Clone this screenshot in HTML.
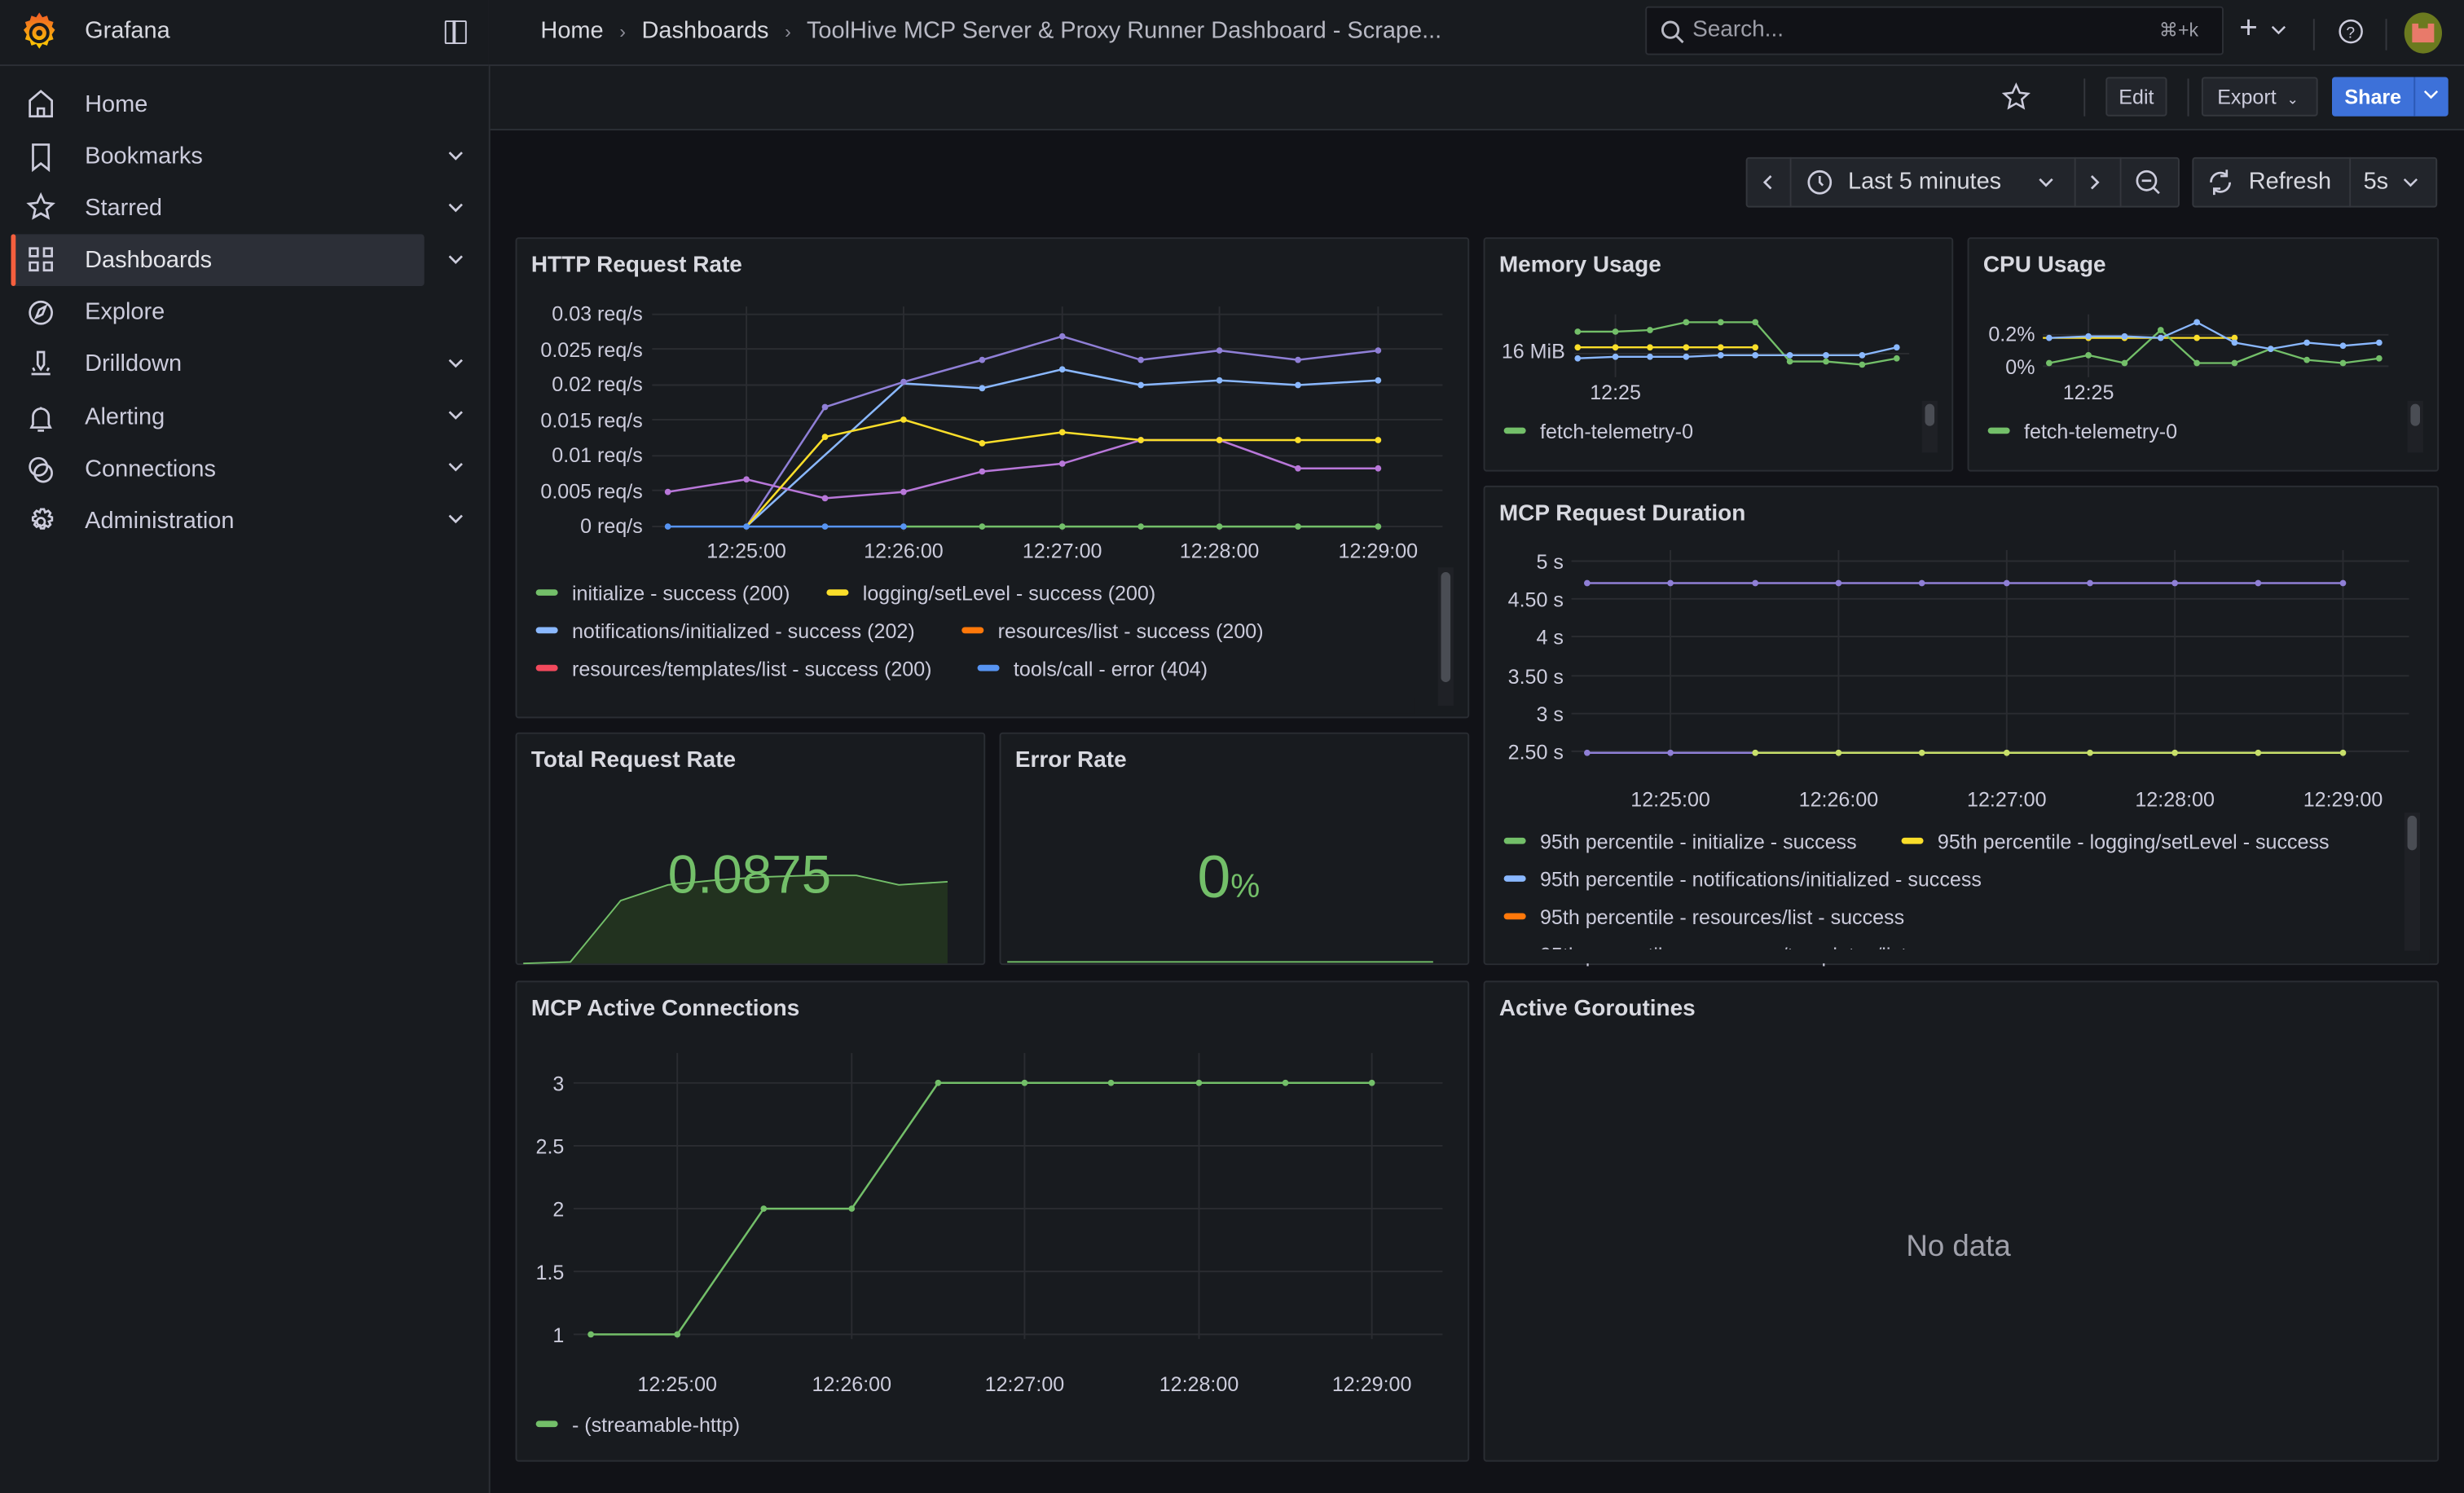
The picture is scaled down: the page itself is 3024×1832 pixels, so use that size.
<!DOCTYPE html>
<html><head><meta charset="utf-8">
<style>
html,body{margin:0;padding:0;background:#111217;overflow:hidden;width:3024px;height:1832px}
#w{position:absolute;left:0;top:0;width:1568px;height:950px;transform:scale(1.92857);transform-origin:0 0;font-family:"Liberation Sans",sans-serif;color:#ccccdc;background:#111217}
.a{position:absolute}
.side{left:0;top:0;width:311px;height:950px;background:#181b1f;border-right:1px solid #2c2f35}
.top{left:311px;top:0;width:1257px;height:41px;background:#181b1f;border-bottom:1px solid #2c2f35}
.tb{left:312px;top:42px;width:1256px;height:40px;background:#181b1f;border-bottom:1px solid #2c2f35}
.nav{left:16px;font-size:15px;color:#ccccdc}
.nav span{position:absolute;left:38px;top:0;white-space:nowrap}
.chev{position:absolute;left:270px;font-size:11px;color:#ccccdc}
.pan{background:#181b1f;border:1px solid #2a2d33;border-radius:2px;box-sizing:border-box}
.pt{position:absolute;left:9px;top:9px;font-size:14.5px;font-weight:bold;color:#d8d9e0}
.btn{background:#22252b;border:1px solid #34373d;border-radius:2px;box-sizing:border-box;font-size:13px;color:#ccccdc;text-align:center}
svg text{font-family:"Liberation Sans",sans-serif}
</style></head><body><div id="w">
<div class="a side"></div>
<div class="a" style="left:0;top:41px;width:311px;height:1px;background:#2c2f35"></div>
<div class="a top"></div>
<div class="a tb"></div>

<!-- logo -->
<svg class="a" style="left:12px;top:7px" width="26" height="28" viewBox="0 0 26 28">
<defs><linearGradient id="lg" x1="0" y1="1" x2="0" y2="0"><stop offset="0" stop-color="#fcd000"/><stop offset="1" stop-color="#f05a28"/></linearGradient></defs>
<path d="M13 1l2 3 3-1 1 3 3 1-1 3 2 2-2 3 1 3-3 1-1 3-3-1-2 3-2-3-3 1-1-3-3-1 1-3-2-3 2-2-1-3 3-1 1-3 3 1z" fill="url(#lg)"/>
<circle cx="13" cy="14" r="5.5" fill="none" stroke="#181b1f" stroke-width="2"/><circle cx="13" cy="14" r="2" fill="#181b1f"/>
</svg>
<div class="a" style="left:54px;top:11px;font-size:15px;color:#d8d9e0">Grafana</div>
<div class="a" style="left:283px;top:13px;width:12px;height:13px;border:1.5px solid #ccccdc;border-radius:1px"></div>
<div class="a" style="left:288px;top:13px;width:1.5px;height:15px;background:#ccccdc"></div>

<div class="a" style="left:7px;top:149px;width:263px;height:33px;background:#2c2f37;border-radius:2px"></div>
<div class="a" style="left:7px;top:149px;width:3px;height:33px;background:#f55f3e;border-radius:2px"></div>

<svg class="a" style="left:16px;top:56px" width="20" height="290" viewBox="0 0 20 290" fill="none" stroke="#ccccdc" stroke-width="1.4">
<path d="M3 18V8l7-6 7 6v10zM8 18v-5h4v5"/>
<path d="M5 36h10v16l-5-4-5 4z"/>
<path d="M10 68l2.3 5 5.3.6-4 3.6 1.1 5.3-4.7-2.7-4.7 2.7 1.1-5.3-4-3.6 5.3-.6z"/>
<path d="M3 102h5v5H3zM12 102h5v5h-5zM3 111h5v5H3zM12 111h5v5h-5z"/>
<circle cx="10" cy="143" r="7"/><path d="M7 146l2-5 4-2-2 5z"/>
<path d="M8 168h4v8l-2 3-2-3zM4 182h12M5 178l1 2M15 178l-1 2"/>
<path d="M5 214v-5a5 5 0 0110 0v5l1 2H4zM8 218h4M10 203v1"/>
<circle cx="8.5" cy="241" r="5.5"/><circle cx="11.5" cy="245" r="5.5"/>
<circle cx="10" cy="276" r="2.5"/><path d="M10 268l2 0 .7 2 2-1 1.4 1.4-1 2 2 .7v2l-2 .7 1 2-1.4 1.4-2-1-.7 2h-2l-.7-2-2 1-1.4-1.4 1-2-2-.7v-2l2-.7-1-2 1.4-1.4 2 1z"/>
</svg>
<div class="a nav" style="top:58px"><span>Home</span></div>
<div class="a nav" style="top:91px"><span>Bookmarks</span></div>
<div class="a nav" style="top:124px"><span>Starred</span></div>
<div class="a nav" style="top:157px"><span style="color:#e4e5ea">Dashboards</span></div>
<div class="a nav" style="top:190px"><span>Explore</span></div>
<div class="a nav" style="top:223px"><span>Drilldown</span></div>
<div class="a nav" style="top:257px"><span>Alerting</span></div>
<div class="a nav" style="top:290px"><span>Connections</span></div>
<div class="a nav" style="top:323px"><span>Administration</span></div>
<svg class="a" style="left:284px;top:94px" width="12" height="245" viewBox="0 0 12 245" fill="none" stroke="#ccccdc" stroke-width="1.4">
<path d="M2 3l4 4 4-4M2 36l4 4 4-4M2 69l4 4 4-4M2 135l4 4 4-4M2 168l4 4 4-4M2 201l4 4 4-4M2 234l4 4 4-4"/></svg>

<!-- breadcrumb -->
<div class="a" style="left:344px;top:11px;font-size:15px;color:#d8d9e0;white-space:nowrap">Home <span style="color:#8e8e99;font-size:12px;margin:0 6px">›</span> Dashboards <span style="color:#8e8e99;font-size:12px;margin:0 6px">›</span> <span style="color:#b8b9c4">ToolHive MCP Server &amp; Proxy Runner Dashboard - Scrape...</span></div>
<div class="a" style="left:1047px;top:4px;width:368px;height:31px;background:#111217;border:1px solid #2c2f35;border-radius:2px;box-sizing:border-box"></div>
<svg class="a" style="left:1056px;top:12px" width="16" height="16" fill="none" stroke="#b8b9c4" stroke-width="1.5"><circle cx="7" cy="7" r="5"/><path d="M11 11l4 4"/></svg>
<div class="a" style="left:1077px;top:11px;font-size:14.5px;color:#9d9ea8">Search...</div>
<div class="a" style="left:1374px;top:12px;font-size:12px;color:#9d9ea8">⌘+k</div>
<div class="a" style="left:1425px;top:7px;font-size:20px;color:#ccccdc">+</div>
<svg class="a" style="left:1445px;top:16px" width="10" height="8" fill="none" stroke="#ccccdc" stroke-width="1.3"><path d="M1 1l4 4 4-4"/></svg>
<div class="a" style="left:1472px;top:12px;width:1px;height:20px;background:#34373d"></div>
<svg class="a" style="left:1487px;top:11px" width="18" height="18" fill="none" stroke="#ccccdc" stroke-width="1.3"><circle cx="9" cy="9" r="7"/><text x="6" y="13" font-size="10" fill="#ccccdc" stroke="none">?</text></svg>
<div class="a" style="left:1518px;top:12px;width:1px;height:20px;background:#34373d"></div>
<div class="a" style="left:1530px;top:8px;width:24px;height:26px;border-radius:50%;background:#6b7a1f;overflow:hidden"><div style="position:absolute;left:5px;top:7px;width:14px;height:12px;background:#e87a6a"></div><div style="position:absolute;left:9px;top:3px;width:6px;height:7px;background:#6b7a1f"></div></div>

<!-- toolbar -->
<svg class="a" style="left:1273px;top:52px" width="20" height="20" fill="none" stroke="#ccccdc" stroke-width="1.3"><path d="M10 2l2.3 5 5.3.6-4 3.6 1.1 5.3-4.7-2.7-4.7 2.7 1.1-5.3-4-3.6 5.3-.6z"/></svg>
<div class="a" style="left:1326px;top:50px;width:1px;height:24px;background:#34373d"></div>
<div class="a btn" style="left:1340px;top:49px;width:39px;height:25px;line-height:23px">Edit</div>
<div class="a" style="left:1392px;top:50px;width:1px;height:24px;background:#34373d"></div>
<div class="a btn" style="left:1401px;top:49px;width:74px;height:25px;line-height:23px;text-align:left;padding-left:9px">Export <span style="font-size:9px;margin-left:3px">⌄</span></div>
<div class="a" style="left:1484px;top:49px;width:74px;height:25px;background:#3d71d9;border-radius:2px"></div>
<div class="a" style="left:1492px;top:54px;font-size:13px;font-weight:bold;color:#fff">Share</div>
<div class="a" style="left:1536px;top:49px;width:1px;height:25px;background:#2b58b5"></div>
<svg class="a" style="left:1542px;top:57px" width="10" height="8" fill="none" stroke="#fff" stroke-width="1.3"><path d="M1 1l4 4 4-4"/></svg>

<!-- time picker -->
<div class="a btn" style="left:1111px;top:100px;width:276px;height:32px"></div>
<div class="a" style="left:1139px;top:100px;width:1px;height:32px;background:#34373d"></div>
<div class="a" style="left:1320px;top:100px;width:1px;height:32px;background:#34373d"></div>
<div class="a" style="left:1349px;top:100px;width:1px;height:32px;background:#34373d"></div>
<svg class="a" style="left:1111px;top:100px" width="276" height="32" fill="none" stroke="#ccccdc" stroke-width="1.4">
<path d="M16 12l-4 4 4 4M220 12l4 4-4 4"/><circle cx="47" cy="16" r="7"/><path d="M47 12v4l2 2"/><path d="M187 14l4 4 4-4"/>
<circle cx="255" cy="15" r="6"/><path d="M252 15h6M259 19l4 4"/></svg>
<div class="a" style="left:1176px;top:107px;font-size:15px;color:#d8d9e0">Last 5 minutes</div>
<div class="a btn" style="left:1395px;top:100px;width:156px;height:32px"></div>
<div class="a" style="left:1495px;top:100px;width:1px;height:32px;background:#34373d"></div>
<svg class="a" style="left:1404px;top:107px" width="18" height="18" fill="none" stroke="#ccccdc" stroke-width="1.4"><path d="M3 9a6 6 0 0110-4.5M15 9a6 6 0 01-10 4.5M13 1v4h-4M5 17v-4h4"/></svg>
<div class="a" style="left:1431px;top:107px;font-size:15px;color:#d8d9e0">Refresh</div>
<div class="a" style="left:1504px;top:107px;font-size:15px;color:#d8d9e0">5s</div>
<svg class="a" style="left:1529px;top:113px" width="10" height="8" fill="none" stroke="#ccccdc" stroke-width="1.3"><path d="M1 1l4 4 4-4"/></svg>

<!-- panels -->
<div class="a pan" style="left:328px;top:151px;width:607px;height:306px"><div class="pt">HTTP Request Rate</div></div>
<div class="a pan" style="left:944px;top:151px;width:299px;height:149px"><div class="pt">Memory Usage</div></div>
<div class="a pan" style="left:1252px;top:151px;width:300px;height:149px"><div class="pt">CPU Usage</div></div>
<div class="a pan" style="left:944px;top:309px;width:608px;height:305px"><div class="pt">MCP Request Duration</div></div>
<div class="a pan" style="left:328px;top:466px;width:299px;height:148px"><div class="pt">Total Request Rate</div></div>
<div class="a pan" style="left:636px;top:466px;width:299px;height:148px"><div class="pt">Error Rate</div></div>
<div class="a pan" style="left:328px;top:624px;width:607px;height:306px"><div class="pt">MCP Active Connections</div></div>
<div class="a pan" style="left:944px;top:624px;width:608px;height:306px"><div class="pt">Active Goroutines</div></div>
<div class="a" style="left:1213px;top:783px;font-size:19px;color:#a0a1ab">No data</div>

<svg class="a" style="left:0;top:0" width="1568" height="950" viewBox="0 0 1568 950">
<g stroke="#2a2c31" stroke-width="1" fill="none">
<path d="M415 200H918M415 222H918M415 245H918M415 267H918M415 290H918M415 312H918M415 335H918M475 195V338M575 195V338M676 195V338M776 195V338M877 195V338"/>
<path d="M1002 225H1215M1028 200V240"/>
<path d="M1300 213H1520M1300 233H1520M1329 200V240"/>
<path d="M1000 357H1533M1000 381H1533M1000 405H1533M1000 430H1533M1000 454H1533M1000 478H1533M1063 350V482M1170 350V482M1277 350V482M1384 350V482M1491 350V482"/>
<path d="M365 689H918M365 729H918M365 769H918M365 809H918M365 849H918M431 670V852M542 670V852M652 670V852M763 670V852M873 670V852"/>
</g>
<g font-size="13" fill="#ccccdc" text-anchor="end">
<text x="409" y="204">0.03 req/s</text><text x="409" y="227">0.025 req/s</text><text x="409" y="249">0.02 req/s</text><text x="409" y="272">0.015 req/s</text><text x="409" y="294">0.01 req/s</text><text x="409" y="317">0.005 req/s</text><text x="409" y="339">0 req/s</text>
<text x="996" y="228">16 MiB</text>
<text x="1295" y="217">0.2%</text><text x="1295" y="238">0%</text>
<text x="995" y="362">5 s</text><text x="995" y="386">4.50 s</text><text x="995" y="410">4 s</text><text x="995" y="435">3.50 s</text><text x="995" y="459">3 s</text><text x="995" y="483">2.50 s</text>
<text x="359" y="694">3</text><text x="359" y="734">2.5</text><text x="359" y="774">2</text><text x="359" y="814">1.5</text><text x="359" y="854">1</text>
</g>
<g font-size="13" fill="#ccccdc" text-anchor="middle">
<text x="475" y="355">12:25:00</text><text x="575" y="355">12:26:00</text><text x="676" y="355">12:27:00</text><text x="776" y="355">12:28:00</text><text x="877" y="355">12:29:00</text>
<text x="1028" y="254">12:25</text><text x="1329" y="254">12:25</text>
<text x="1063" y="513">12:25:00</text><text x="1170" y="513">12:26:00</text><text x="1277" y="513">12:27:00</text><text x="1384" y="513">12:28:00</text><text x="1491" y="513">12:29:00</text>
<text x="431" y="885">12:25:00</text><text x="542" y="885">12:26:00</text><text x="652" y="885">12:27:00</text><text x="763" y="885">12:28:00</text><text x="873" y="885">12:29:00</text>
</g>
<!-- http lines -->
<g fill="none" stroke-width="1.3">
<polyline stroke="#8f7fd6" points="475,335 525,259 575,243 625,229 676,214 726,229 776,223 826,229 877,223"/>
<polyline stroke="#8ab8ff" points="475,335 575,244 625,247 676,235 726,245 776,242 826,245 877,242"/>
<polyline stroke="#b877d9" points="425,313 475,305 525,317 575,313 625,300 676,295 726,280 776,280 826,298 877,298"/>
<polyline stroke="#fade2a" points="475,335 525,278 575,267 625,282 676,275 726,280 776,280 826,280 877,280"/>
<polyline stroke="#73bf69" points="575,335 877,335"/>
<polyline stroke="#5794f2" points="425,335 575,335"/>
</g>
<g fill="#8f7fd6"><circle cx="525" cy="259" r="2"/><circle cx="575" cy="243" r="2"/><circle cx="625" cy="229" r="2"/><circle cx="676" cy="214" r="2"/><circle cx="726" cy="229" r="2"/><circle cx="776" cy="223" r="2"/><circle cx="826" cy="229" r="2"/><circle cx="877" cy="223" r="2"/></g>
<g fill="#8ab8ff"><circle cx="625" cy="247" r="2"/><circle cx="676" cy="235" r="2"/><circle cx="726" cy="245" r="2"/><circle cx="776" cy="242" r="2"/><circle cx="826" cy="245" r="2"/><circle cx="877" cy="242" r="2"/></g>
<g fill="#b877d9"><circle cx="425" cy="313" r="2"/><circle cx="475" cy="305" r="2"/><circle cx="525" cy="317" r="2"/><circle cx="575" cy="313" r="2"/><circle cx="625" cy="300" r="2"/><circle cx="676" cy="295" r="2"/><circle cx="726" cy="280" r="2"/><circle cx="776" cy="280" r="2"/><circle cx="826" cy="298" r="2"/><circle cx="877" cy="298" r="2"/></g>
<g fill="#fade2a"><circle cx="525" cy="278" r="2"/><circle cx="575" cy="267" r="2"/><circle cx="625" cy="282" r="2"/><circle cx="676" cy="275" r="2"/><circle cx="726" cy="280" r="2"/><circle cx="776" cy="280" r="2"/><circle cx="826" cy="280" r="2"/><circle cx="877" cy="280" r="2"/></g>
<g fill="#73bf69"><circle cx="625" cy="335" r="2"/><circle cx="676" cy="335" r="2"/><circle cx="726" cy="335" r="2"/><circle cx="776" cy="335" r="2"/><circle cx="826" cy="335" r="2"/><circle cx="877" cy="335" r="2"/></g>
<g fill="#5794f2"><circle cx="425" cy="335" r="2"/><circle cx="475" cy="335" r="2"/><circle cx="525" cy="335" r="2"/><circle cx="575" cy="335" r="2"/></g>
<!-- http legend -->
<g font-size="13" fill="#ccccdc">
<rect x="341" y="375" width="14" height="4" rx="2" fill="#73bf69"/><text x="364" y="382">initialize - success (200)</text>
<rect x="526" y="375" width="14" height="4" rx="2" fill="#fade2a"/><text x="549" y="382">logging/setLevel - success (200)</text>
<rect x="341" y="399" width="14" height="4" rx="2" fill="#8ab8ff"/><text x="364" y="406">notifications/initialized - success (202)</text>
<rect x="612" y="399" width="14" height="4" rx="2" fill="#ff780a"/><text x="635" y="406">resources/list - success (200)</text>
<rect x="341" y="423" width="14" height="4" rx="2" fill="#f2495c"/><text x="364" y="430">resources/templates/list - success (200)</text>
<rect x="622" y="423" width="14" height="4" rx="2" fill="#5794f2"/><text x="645" y="430">tools/call - error (404)</text>
</g>
<rect x="330" y="444" width="570" height="10" fill="#181b1f"/>
<rect x="915" y="361" width="10" height="88" fill="#1f2126"/><rect x="917" y="364" width="6" height="70" rx="3" fill="#4a4d54"/>
<!-- memory -->
<g fill="none" stroke-width="1.2">
<polyline stroke="#73bf69" points="1004,211 1028,211 1050,210 1073,205 1095,205 1117,205 1139,230 1162,230 1185,232 1207,228"/>
<polyline stroke="#fade2a" points="1004,221 1117,221"/>
<polyline stroke="#8ab8ff" points="1004,228 1028,227 1050,227 1073,227 1095,226 1117,226 1139,226 1162,226 1185,226 1207,221"/>
</g>
<g fill="#73bf69"><circle cx="1004" cy="211" r="2"/><circle cx="1028" cy="211" r="2"/><circle cx="1050" cy="210" r="2"/><circle cx="1073" cy="205" r="2"/><circle cx="1095" cy="205" r="2"/><circle cx="1117" cy="205" r="2"/><circle cx="1139" cy="230" r="2"/><circle cx="1162" cy="230" r="2"/><circle cx="1185" cy="232" r="2"/><circle cx="1207" cy="228" r="2"/></g>
<g fill="#fade2a"><circle cx="1004" cy="221" r="2"/><circle cx="1028" cy="221" r="2"/><circle cx="1050" cy="221" r="2"/><circle cx="1073" cy="221" r="2"/><circle cx="1095" cy="221" r="2"/><circle cx="1117" cy="221" r="2"/></g>
<g fill="#8ab8ff"><circle cx="1004" cy="228" r="2"/><circle cx="1028" cy="227" r="2"/><circle cx="1050" cy="227" r="2"/><circle cx="1073" cy="227" r="2"/><circle cx="1095" cy="226" r="2"/><circle cx="1117" cy="226" r="2"/><circle cx="1139" cy="226" r="2"/><circle cx="1162" cy="226" r="2"/><circle cx="1185" cy="226" r="2"/><circle cx="1207" cy="221" r="2"/></g>
<rect x="957" y="272" width="14" height="4" rx="2" fill="#73bf69"/><text x="980" y="279" font-size="13" fill="#ccccdc">fetch-telemetry-0</text>
<rect x="1223" y="255" width="10" height="33" fill="#1f2126"/><rect x="1225" y="257" width="6" height="14" rx="3" fill="#4a4d54"/>
<!-- cpu -->
<g fill="none" stroke-width="1.2">
<polyline stroke="#fade2a" points="1300,215 1422,215"/>
<polyline stroke="#73bf69" points="1304,231 1329,226 1352,231 1375,210 1398,231 1422,231 1445,222 1468,229 1491,231 1514,228"/>
<polyline stroke="#8ab8ff" points="1304,215 1329,214 1352,214 1375,215 1398,205 1422,218 1445,222 1468,218 1491,220 1514,218"/>
</g>
<g fill="#73bf69"><circle cx="1304" cy="231" r="2"/><circle cx="1329" cy="226" r="2"/><circle cx="1352" cy="231" r="2"/><circle cx="1375" cy="210" r="2"/><circle cx="1398" cy="231" r="2"/><circle cx="1422" cy="231" r="2"/><circle cx="1445" cy="222" r="2"/><circle cx="1468" cy="229" r="2"/><circle cx="1491" cy="231" r="2"/><circle cx="1514" cy="228" r="2"/></g>
<g fill="#fade2a"><circle cx="1329" cy="215" r="2"/><circle cx="1352" cy="215" r="2"/><circle cx="1398" cy="215" r="2"/><circle cx="1422" cy="215" r="2"/></g>
<g fill="#8ab8ff"><circle cx="1304" cy="215" r="2"/><circle cx="1329" cy="214" r="2"/><circle cx="1352" cy="214" r="2"/><circle cx="1375" cy="215" r="2"/><circle cx="1398" cy="205" r="2"/><circle cx="1422" cy="218" r="2"/><circle cx="1445" cy="222" r="2"/><circle cx="1468" cy="218" r="2"/><circle cx="1491" cy="220" r="2"/><circle cx="1514" cy="218" r="2"/></g>
<rect x="1265" y="272" width="14" height="4" rx="2" fill="#73bf69"/><text x="1288" y="279" font-size="13" fill="#ccccdc">fetch-telemetry-0</text>
<rect x="1532" y="255" width="10" height="33" fill="#1f2126"/><rect x="1534" y="257" width="6" height="14" rx="3" fill="#4a4d54"/>
<!-- duration -->
<path d="M1010 371H1491" stroke="#8f7fd6" stroke-width="1.3"/>
<path d="M1010 479H1117" stroke="#8f7fd6" stroke-width="1.3"/>
<path d="M1117 479H1491" stroke="#c8e06a" stroke-width="1.3"/>
<g fill="#8f7fd6"><circle cx="1010" cy="371" r="2"/><circle cx="1063" cy="371" r="2"/><circle cx="1117" cy="371" r="2"/><circle cx="1170" cy="371" r="2"/><circle cx="1223" cy="371" r="2"/><circle cx="1277" cy="371" r="2"/><circle cx="1330" cy="371" r="2"/><circle cx="1384" cy="371" r="2"/><circle cx="1437" cy="371" r="2"/><circle cx="1491" cy="371" r="2"/><circle cx="1010" cy="479" r="2"/><circle cx="1063" cy="479" r="2"/></g>
<g fill="#c8e06a"><circle cx="1117" cy="479" r="2"/><circle cx="1170" cy="479" r="2"/><circle cx="1223" cy="479" r="2"/><circle cx="1277" cy="479" r="2"/><circle cx="1330" cy="479" r="2"/><circle cx="1384" cy="479" r="2"/><circle cx="1437" cy="479" r="2"/><circle cx="1491" cy="479" r="2"/></g>
<g font-size="13" fill="#ccccdc">
<rect x="957" y="533" width="14" height="4" rx="2" fill="#73bf69"/><text x="980" y="540">95th percentile - initialize - success</text>
<rect x="1210" y="533" width="14" height="4" rx="2" fill="#fade2a"/><text x="1233" y="540">95th percentile - logging/setLevel - success</text>
<rect x="957" y="557" width="14" height="4" rx="2" fill="#8ab8ff"/><text x="980" y="564">95th percentile - notifications/initialized - success</text>
<rect x="957" y="581" width="14" height="4" rx="2" fill="#ff780a"/><text x="980" y="588">95th percentile - resources/list - success</text>
<text x="980" y="612">95th percentile - resources/templates/list - success</text>
</g>
<rect x="946" y="604" width="600" height="9" fill="#181b1f"/>
<rect x="1530" y="517" width="10" height="88" fill="#1f2126"/><rect x="1532" y="519" width="6" height="22" rx="3" fill="#4a4d54"/>
<!-- total request rate -->
<path d="M333,613 L363,612 L395,573 L425,563 L455,560 L485,558 L515,557 L545,557 L572,563 L603,561 L603,613Z" fill="#22321f"/>
<polyline points="333,613 363,612 395,573 425,563 455,560 485,558 515,557 545,557 572,563 603,561" fill="none" stroke="#73bf69" stroke-width="1"/>
<text x="477" y="568" font-size="34" fill="#73bf69" text-anchor="middle">0.0875</text>
<!-- error rate -->
<path d="M641 612H912" stroke="#73bf69" stroke-width="1"/>
<text x="762" y="571" font-size="38" fill="#73bf69">0<tspan font-size="21">%</tspan></text>
<!-- connections -->
<polyline points="376,849 431,849 486,769 542,769 597,689 652,689 707,689 763,689 818,689 873,689" fill="none" stroke="#73bf69" stroke-width="1.3"/>
<g fill="#73bf69"><circle cx="376" cy="849" r="2"/><circle cx="431" cy="849" r="2"/><circle cx="486" cy="769" r="2"/><circle cx="542" cy="769" r="2"/><circle cx="597" cy="689" r="2"/><circle cx="652" cy="689" r="2"/><circle cx="707" cy="689" r="2"/><circle cx="763" cy="689" r="2"/><circle cx="818" cy="689" r="2"/><circle cx="873" cy="689" r="2"/></g>
<rect x="341" y="904" width="14" height="4" rx="2" fill="#73bf69"/><text x="364" y="911" font-size="13" fill="#ccccdc">- (streamable-http)</text>
</svg>
</div></body></html>
